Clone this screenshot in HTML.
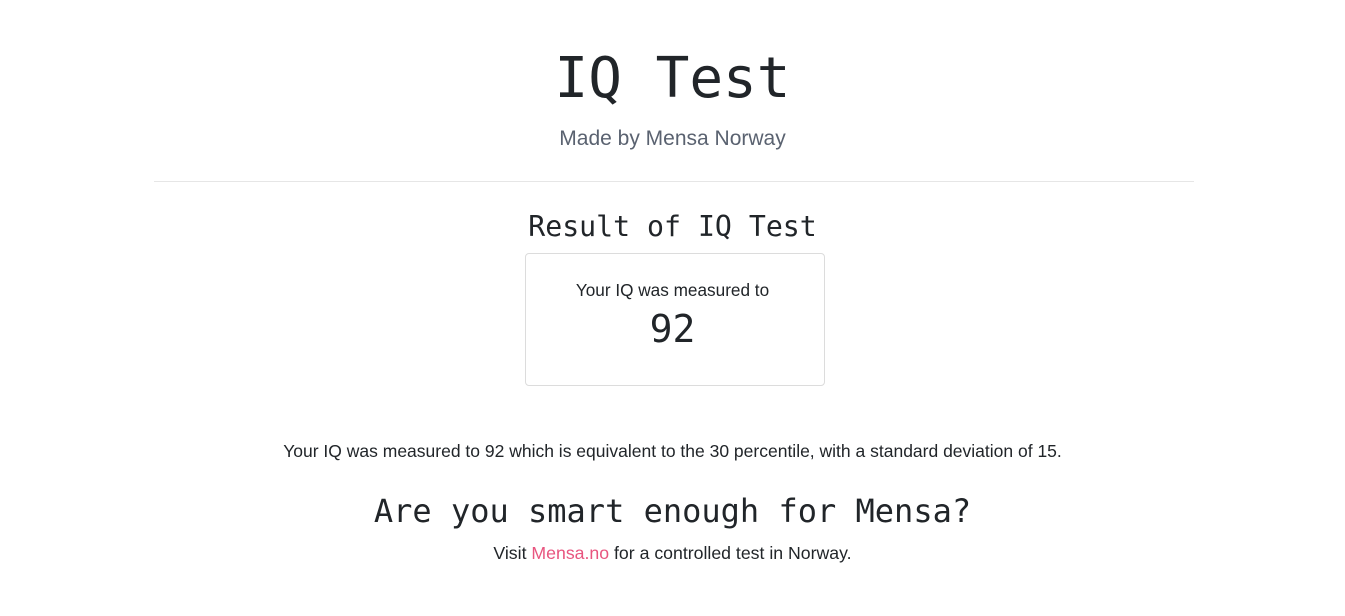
<!DOCTYPE html>
<html><head><meta charset="utf-8"><style>
html,body{margin:0;padding:0;background:#fff;width:1345px;height:616px;overflow:hidden;color:#212529;font-family:"Liberation Sans",sans-serif}
.abs{position:absolute;left:0;width:1345px;text-align:center;white-space:nowrap}
.mono{font-family:"DejaVu Sans Mono","Liberation Mono",monospace}
</style></head><body>
<div class="abs mono" style="top:44px;font-size:56px;line-height:70px;">IQ Test</div>
<div class="abs" style="top:125px;font-size:21px;line-height:28px;color:#5a6270;font-weight:300;">Made by Mensa Norway</div>
<div style="position:absolute;left:154px;top:181px;width:1040px;height:1px;background:#e6e6e6"></div>
<div class="abs mono" style="top:208px;font-size:28.2px;line-height:38px;">Result of IQ Test</div>
<div style="position:absolute;left:525px;top:253px;width:298px;height:131px;border:1px solid #dcdcdc;border-radius:4px"></div>
<div class="abs" style="top:279px;font-size:17.2px;line-height:22px;">Your IQ was measured to</div>
<div class="abs mono" style="top:305px;font-size:38px;line-height:48px;">92</div>
<div class="abs" style="top:440px;font-size:17.5px;line-height:22px;">Your IQ was measured to 92 which is equivalent to the 30 percentile, with a standard deviation of 15.</div>
<div class="abs mono" style="top:490px;font-size:32px;line-height:42px;">Are you smart enough for Mensa?</div>
<div class="abs" style="top:542px;font-size:17.7px;line-height:22px;">Visit <span style="color:#e8557f">Mensa.no</span> for a controlled test in Norway.</div>
</body></html>
